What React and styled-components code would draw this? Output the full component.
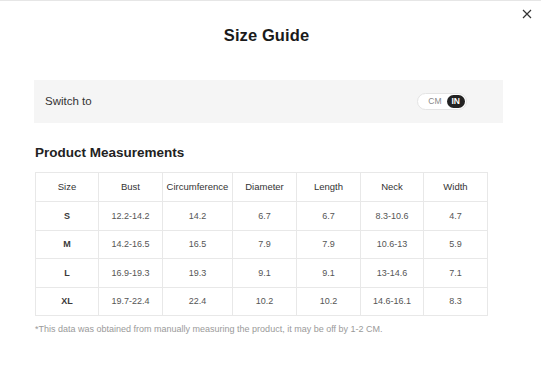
import styled, { createGlobalStyle } from "styled-components";

const GlobalStyle = createGlobalStyle`
  html, body {
    margin: 0;
    padding: 0;
    background: #ffffff;
  }
  body {
    font-family: "Liberation Sans", Arial, sans-serif;
    color: #222;
  }
`;

// ----- Layout -----
const Modal = styled.div`
  position: relative;
  width: 541px;
  height: 369px;
  box-sizing: border-box;
  border-top: 1px solid #e6e6e6;
  padding: 0 38px 0 34px;
  background: #fff;
  overflow: hidden;
`;

const CloseButton = styled.button`
  position: absolute;
  top: 7px;
  right: 9px;
  width: 11px;
  height: 11px;
  padding: 0;
  border: none;
  background: none;
  cursor: pointer;
  display: flex;
  align-items: center;
  justify-content: center;
`;

const Title = styled.h2`
  margin: 24px 0 0;
  font-size: 16.5px;
  line-height: 20px;
  font-weight: 700;
  text-align: center;
  color: #1a1a1a;
  letter-spacing: 0.1px;
  padding-right: 4px;
`;

const SwitchBar = styled.div`
  margin-top: 35px;
  height: 43px;
  display: flex;
  align-items: center;
  justify-content: space-between;
  padding: 0 36px 0 11px;
  background: #f5f5f5;
`;

const SwitchLabel = styled.span`
  font-size: 11.5px;
  color: #333;
  margin-top: -1px;
`;

const Toggle = styled.div`
  display: flex;
  align-items: center;
  height: 17px;
  box-sizing: border-box;
  padding: 0 1px 0 7px;
  border: 1px solid #e4e4e4;
  border-radius: 9px;
  background: #fff;
`;

const ToggleOption = styled.span`
  font-size: 8.5px;
  line-height: 13px;
  height: 13px;
  padding: 0 ${(p) => (p.$active ? "5px" : "3px")};
  margin-right: ${(p) => (p.$active ? "0" : "2px")};
  border-radius: 7px;
  color: ${(p) => (p.$active ? "#fff" : "#888")};
  background: ${(p) => (p.$active ? "#222" : "transparent")};
  font-weight: ${(p) => (p.$active ? 700 : 400)};
`;

const SectionTitle = styled.h3`
  margin: 22px 0 0 1px;
  font-size: 13.5px;
  line-height: 16px;
  font-weight: 700;
  color: #222;
`;

const Table = styled.table`
  margin: 11px 0 0 1px;
  width: 452px;
  border-collapse: collapse;
  table-layout: fixed;
`;

const Th = styled.th`
  height: 26px;
  padding: 0 0 2px;
  border: 1px solid #e8e8e8;
  font-size: 9.5px;
  font-weight: 400;
  color: #333;
  text-align: center;
`;

const Td = styled.td`
  height: 27.5px;
  padding: 0;
  border: 1px solid #e8e8e8;
  font-size: 9px;
  text-align: center;
  color: ${(p) => (p.$strong ? "#3a3a3a" : "#555")};
  font-weight: ${(p) => (p.$strong ? 700 : 400)};
`;

const Note = styled.p`
  margin: 8px 0 0 1px;
  font-size: 9px;
  color: #9a9a9a;
`;

// ----- Data -----
const columns = [
  { label: "Size", width: 63 },
  { label: "Bust", width: 64 },
  { label: "Circumference", width: 70 },
  { label: "Diameter", width: 64 },
  { label: "Length", width: 64 },
  { label: "Neck", width: 63 },
  { label: "Width", width: 64 },
];

const rows = [
  ["S", "12.2-14.2", "14.2", "6.7", "6.7", "8.3-10.6", "4.7"],
  ["M", "14.2-16.5", "16.5", "7.9", "7.9", "10.6-13", "5.9"],
  ["L", "16.9-19.3", "19.3", "9.1", "9.1", "13-14.6", "7.1"],
  ["XL", "19.7-22.4", "22.4", "10.2", "10.2", "14.6-16.1", "8.3"],
];

function CloseIcon() {
  return (
    <svg width="10" height="10" viewBox="0 0 10 10">
      <path d="M1 1 L9 9 M9 1 L1 9" stroke="#333" strokeWidth="1.2" fill="none" />
    </svg>
  );
}

export default function App() {
  return (
    <>
      <GlobalStyle />
      <Modal>
        <CloseButton aria-label="Close">
          <CloseIcon />
        </CloseButton>

        <Title>Size Guide</Title>

        <SwitchBar>
          <SwitchLabel>Switch to</SwitchLabel>
          <Toggle>
            <ToggleOption>CM</ToggleOption>
            <ToggleOption $active>IN</ToggleOption>
          </Toggle>
        </SwitchBar>

        <SectionTitle>Product Measurements</SectionTitle>

        <Table>
          <colgroup>
            {columns.map((c) => (
              <col key={c.label} style={{ width: c.width }} />
            ))}
          </colgroup>
          <thead>
            <tr>
              {columns.map((c) => (
                <Th key={c.label}>{c.label}</Th>
              ))}
            </tr>
          </thead>
          <tbody>
            {rows.map((r) => (
              <tr key={r[0]}>
                {r.map((v, i) => (
                  <Td key={i} $strong={i === 0}>
                    {v}
                  </Td>
                ))}
              </tr>
            ))}
          </tbody>
        </Table>

        <Note>
          *This data was obtained from manually measuring the product, it may be off by 1-2 CM.
        </Note>
      </Modal>
    </>
  );
}
